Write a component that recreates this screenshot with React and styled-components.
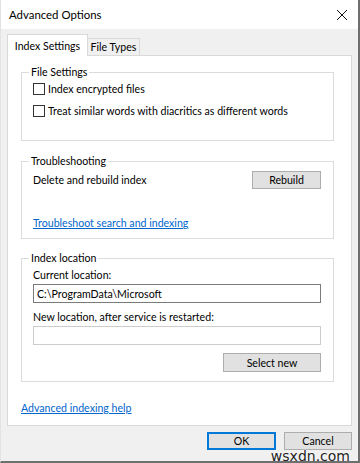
import styled, { createGlobalStyle } from 'styled-components';

const GlobalStyle = createGlobalStyle`
  html, body {
    margin: 0;
    padding: 0;
    background: #f0f0f0;
  }
  body {
    font-family: "Segoe UI", Lato, "Noto Sans", sans-serif;
    font-size: 10.6px;
    color: #000;
  }
`;

const Window = styled.div`
  position: relative;
  width: 360px;
  height: 463px;
  box-sizing: border-box;
  background: #f0f0f0;
  border-left: 1px solid #e2e2e2;
  border-right: 2px solid #6f6f6f;
  border-bottom: 2px solid #6f6f6f;
  overflow: hidden;
`;

const TitleBar = styled.div`
  height: 29px;
  background: #fff;
  display: flex;
  align-items: center;
  justify-content: space-between;
  padding: 0 10px 0 8px;
  font-size: 11.4px;
`;

const CloseButton = styled.button`
  border: none;
  background: none;
  padding: 0;
  width: 12px;
  height: 12px;
  display: flex;
`;

const Body = styled.div`
  padding: 6px 6px 0 6px;
`;

const TabStrip = styled.div`
  display: flex;
  align-items: flex-end;
  height: 21px;
  position: relative;
  z-index: 1;
  margin-bottom: -1px;
`;

const Tab = styled.div`
  box-sizing: border-box;
  height: ${p => (p.$active ? '22px' : '18px')};
  width: ${p => p.$w}px;
  justify-content: center;
  display: flex;
  align-items: center;
  background: ${p => (p.$active ? '#fff' : '#f0f0f0')};
  border: 1px solid #d9d9d9;
  border-bottom: ${p => (p.$active ? 'none' : '1px solid #d9d9d9')};
  border-left: ${p => (p.$active ? '1px solid #d9d9d9' : 'none')};
`;

const Panel = styled.div`
  box-sizing: border-box;
  height: 371px;
  background: #fff;
  border: 1px solid #d9d9d9;
  padding: 9px 17px 0 13px;
  display: flex;
  flex-direction: column;
`;

const Group = styled.fieldset`
  margin: 0 0 ${p => p.$gap || 0}px 0;
  padding: 0 12px ${p => p.$bottom}px 11px;
  border: 1px solid #dcdcdc;
  min-width: 0;
`;

const Legend = styled.legend`
  padding: 0 2px;
  margin-left: -4px;
  line-height: 14px;
`;

const CheckRow = styled.label`
  display: flex;
  align-items: center;
  height: 20px;
  gap: 3px;
  & + & {
    margin-top: 2px;
  }
`;

const Box = styled.span`
  box-sizing: border-box;
  width: 12px;
  height: 12px;
  border: 1px solid #333;
  background: #fff;
  flex: none;
`;

const ActionRow = styled.div`
  display: flex;
  align-items: center;
  justify-content: space-between;
  height: 20px;
  margin-top: 2px;
`;

const Button = styled.button`
  box-sizing: border-box;
  width: ${p => p.$w}px;
  height: ${p => p.$h || 18}px;
  background: #e1e1e1;
  border: ${p => (p.$primary ? '2px solid #0078d7' : '1px solid #adadad')};
  font: inherit;
  color: #000;
  padding: 0;
`;

const Link = styled.a`
  color: #0066cc;
  text-decoration: underline;
  display: block;
  line-height: 16px;
  margin-top: ${p => p.$top}px;
`;

const FieldLabel = styled.div`
  line-height: 16px;
  margin-top: ${p => p.$top || 0}px;
`;

const Input = styled.div`
  box-sizing: border-box;
  height: 19px;
  margin-top: 1px;
  border: 1px solid ${p => (p.$dim ? '#cccccc' : '#7a7a7a')};
  background: #fff;
  padding: 0 3px;
  display: flex;
  align-items: center;
`;

const RightAlign = styled.div`
  display: flex;
  justify-content: flex-end;
  margin-top: 8px;
`;

const Footer = styled.div`
  display: flex;
  justify-content: flex-end;
  gap: 8px;
  margin-top: 6px;
`;

const Watermark = styled.div`
  position: absolute;
  right: 8px;
  bottom: -2px;
  font-family: "DejaVu Sans", sans-serif;
  font-size: 14px;
  line-height: 14px;
  color: #222;
  text-shadow: 0 0 2px #fff, 0 0 2px #fff;
`;

export default function App() {
  return (
    <>
      <GlobalStyle />
      <Window>
        <TitleBar>
          <span>Advanced Options</span>
          <CloseButton aria-label="Close">
            <svg width="12" height="12" viewBox="0 0 12 12">
              <path d="M1 1 L11 11 M11 1 L1 11" stroke="#111" strokeWidth="1" fill="none" />
            </svg>
          </CloseButton>
        </TitleBar>
        <Body>
          <TabStrip>
            <Tab $active $w={81}>Index Settings</Tab>
            <Tab $w={52}>File Types</Tab>
          </TabStrip>
          <Panel>
            <Group $bottom={19} $gap={13}>
              <Legend>File Settings</Legend>
              <CheckRow>
                <Box />
                Index encrypted files
              </CheckRow>
              <CheckRow>
                <Box />
                Treat similar words with diacritics as different words
              </CheckRow>
            </Group>
            <Group $bottom={7} $gap={12}>
              <Legend>Troubleshooting</Legend>
              <ActionRow>
                <span>Delete and rebuild index</span>
                <Button $w={69}>Rebuild</Button>
              </ActionRow>
              <Link $top={25}>Troubleshoot search and indexing</Link>
            </Group>
            <Group $bottom={9}>
              <Legend>Index location</Legend>
              <FieldLabel $top={2}>Current location:</FieldLabel>
              <Input>C:\ProgramData\Microsoft</Input>
              <FieldLabel $top={6}>New location, after service is restarted:</FieldLabel>
              <Input $dim />
              <RightAlign>
                <Button $w={98} $h={19}>Select new</Button>
              </RightAlign>
            </Group>
            <Link $top={18}>Advanced indexing help</Link>
          </Panel>
          <Footer>
            <Button $w={69} $primary>OK</Button>
            <Button $w={68}>Cancel</Button>
          </Footer>
        </Body>
        <Watermark>wsxdn.com</Watermark>
      </Window>
    </>
  );
}
